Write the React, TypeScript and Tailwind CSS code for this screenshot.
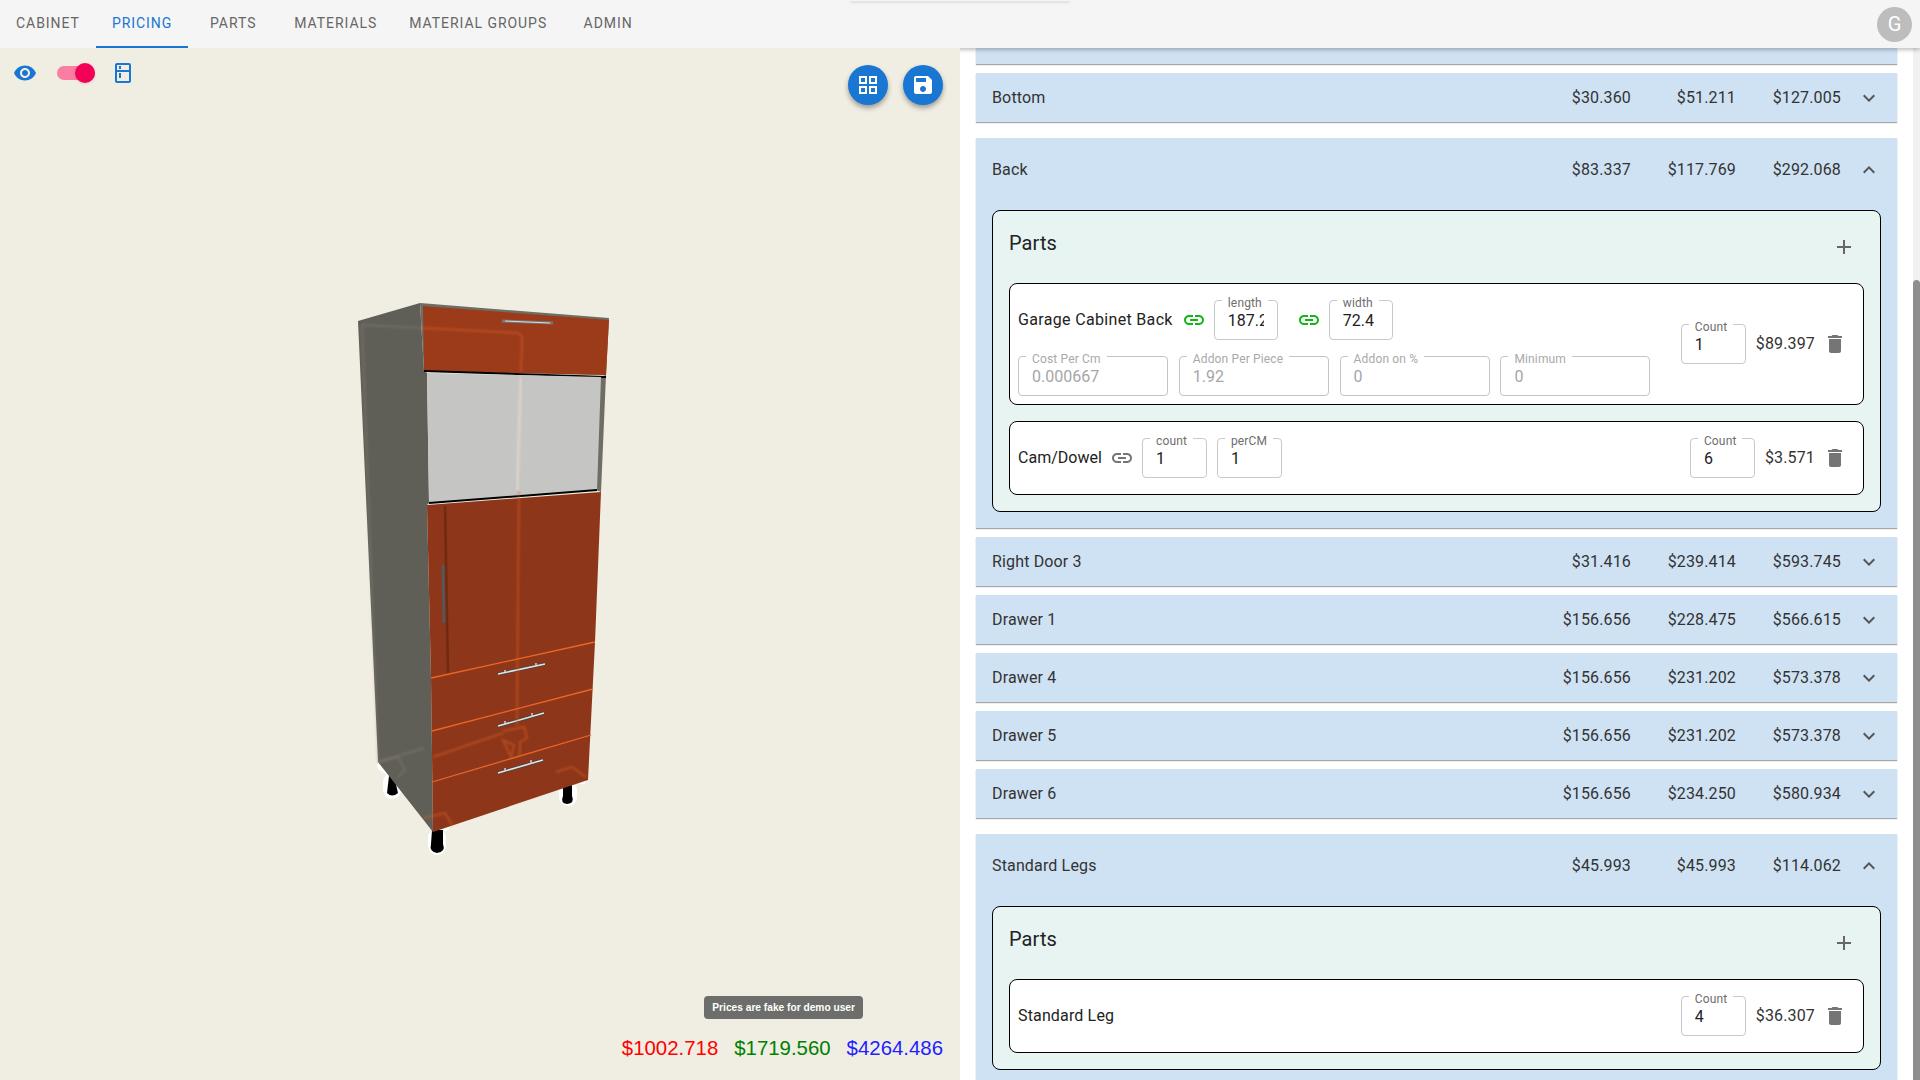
import type { ReactNode } from "react";

const icons = {
  eye: "M12 4.5C7 4.5 2.73 7.61 1 12c1.73 4.39 6 7.5 11 7.5s9.27-3.11 11-7.5c-1.73-4.39-6-7.5-11-7.5zM12 17c-2.76 0-5-2.24-5-5s2.24-5 5-5 5 2.24 5 5-2.24 5-5 5zm0-8c-1.66 0-3 1.34-3 3s1.34 3 3 3 3-1.34 3-3-1.34-3-3-3z",
  kitchen: "M18 2.01 6 2c-1.1 0-2 .89-2 2v16c0 1.1.9 2 2 2h12c1.1 0 2-.9 2-2V4c0-1.11-.9-1.99-2-1.99zM18 20H6v-9.02h12V20zm0-11H6V4h12v5zM8 5h2v3H8zm0 7h2v5H8z",
  grid: "M3 3v8h8V3H3zm6 6H5V5h4v4zm-6 4v8h8v-8H3zm6 6H5v-4h4v4zm4-16v8h8V3h-8zm6 6h-4V5h4v4zm-6 4v8h8v-8h-8zm6 6h-4v-4h4v4z",
  save: "M17 3H5c-1.11 0-2 .9-2 2v14c0 1.1.89 2 2 2h14c1.1 0 2-.9 2-2V7l-4-4zm-5 16c-1.66 0-3-1.34-3-3s1.34-3 3-3 3 1.34 3 3-1.34 3-3 3zm3-10H5V5h10v4z",
  link: "M3.9 12c0-1.71 1.39-3.1 3.1-3.1h4V7H7c-2.76 0-5 2.24-5 5s2.24 5 5 5h4v-1.9H7c-1.71 0-3.1-1.39-3.1-3.1zM8 13h8v-2H8v2zm9-6h-4v1.9h4c1.71 0 3.1 1.39 3.1 3.1s-1.39 3.1-3.1 3.1h-4V17h4c2.76 0 5-2.24 5-5s-2.24-5-5-5z",
  trash: "M6 19c0 1.1.9 2 2 2h8c1.1 0 2-.9 2-2V7H6v12zM19 4h-3.5l-1-1h-5l-1 1H5v2h14V4z",
  add: "M19 13h-6v6h-2v-6H5v-2h6V5h2v6h6v2z",
  more: "M16.59 8.59 12 13.17 7.41 8.59 6 10l6 6 6-6z",
  less: "M12 8l-6 6 1.41 1.41L12 10.83l4.59 4.58L18 14z",
};

const Icon = ({ d, className }: { d: string; className?: string }) => (
  <svg viewBox="0 0 24 24" fill="currentColor" className={`w-6 h-6 shrink-0 ${className ?? ""}`}>
    <path d={d} />
  </svg>
);

const tabs = ["CABINET", "PRICING", "PARTS", "MATERIALS", "MATERIAL GROUPS", "ADMIN"];

const Field = ({
  label,
  value,
  width = "w-[65px]",
  disabled,
}: {
  label: string;
  value: string;
  width?: string;
  disabled?: boolean;
}) => (
  <div
    className={`relative h-10 shrink-0 rounded border pl-[13px] pr-[13px] pt-[8px] ${width} ${
      disabled ? "border-[#c4c4c4] text-[#a6a6a6]" : "border-[#c9c9c9] text-[#222]"
    }`}
  >
    <span
      className={`absolute left-[7px] top-[-5px] bg-white px-[6px] text-[12px] leading-[15px] tracking-[0.15px] ${
        disabled ? "text-[#a9a9a9]" : "text-[#6e6e6e]"
      }`}
    >
      {label}
    </span>
    <div className="overflow-hidden whitespace-nowrap text-base leading-[23px]">{value}</div>
  </div>
);

const Price = ({ children }: { children: ReactNode }) => (
  <span className="w-[105px] text-right text-base tracking-[0.15px] text-[#333]">{children}</span>
);

const Row = ({
  name,
  prices,
  open,
  className,
  children,
}: {
  name: string;
  prices: string[];
  open?: boolean;
  className?: string;
  children?: ReactNode;
}) => (
  <div className={`shrink-0 bg-[#cfe2f3] shadow-[0_1px_1px_rgba(0,0,0,0.35)] ${className ?? ""}`}>
    <div className={`flex items-center pl-4 pr-4 ${open ? "h-[64px]" : "h-[49px]"}`}>
      <span className="flex-1 text-base tracking-[0.15px] text-[#333]">{name}</span>
      {prices.map((p, i) => (
        <Price key={i}>{p}</Price>
      ))}
      <Icon d={open ? icons.less : icons.more} className="ml-4 text-[#555]" />
    </div>
    {children && <div className="px-4 pb-4 pt-2">{children}</div>}
  </div>
);

const Parts = ({ children }: { children: ReactNode }) => (
  <div className="rounded-lg border border-black bg-[#e8f4f1] px-4 pb-4">
    <div className="flex h-[72px] items-center justify-between pb-[9px]">
      <span className="text-xl tracking-[0.1px] text-[#222]">Parts</span>
      <Icon d={icons.add} className="mr-2 mt-[8px] text-[#666]" />
    </div>
    <div className="flex flex-col gap-4">{children}</div>
  </div>
);

const PartName = ({ children, className }: { children: ReactNode; className?: string }) => (
  <span className={`whitespace-nowrap text-base text-[#222] ${className ?? "tracking-[0.15px]"}`}>{children}</span>
);

const PartEnd = ({ count, price, className }: { count: string; price: string; className?: string }) => (
  <div className={`flex items-center ${className ?? ""}`}>
    <Field label="Count" value={count} />
    <span className="ml-[10px] text-base tracking-[0.15px] text-[#333]">{price}</span>
    <Icon d={icons.trash} className="ml-2 text-[#757575]" />
  </div>
);

const CabinetDrawing = () => (
  <svg viewBox="0 48 960 1032" className="absolute inset-0 h-full w-full">
    <defs>
      <filter id="soft" x="-10%" y="-10%" width="120%" height="120%">
        <feGaussianBlur stdDeviation="0.9" />
      </filter>
    </defs>

    {/* feet halo */}
    <g stroke="#ffffff" strokeWidth="18" strokeLinecap="round" fill="none">
      <path d="M392 782 L392 790" />
      <path d="M437 838 L437 846" />
      <path d="M568 790 L568 797" />
      <path d="M382 766 L392 772" strokeWidth="10" />
      <path d="M428 818 L445 826" strokeWidth="10" />
      <path d="M560 775 L582 780" strokeWidth="8" />
    </g>
    <path d="M389 776 L394 776 L398 793 Q392 798 387 793Z" fill="#000" />
    <path d="M432 830 L443 830 L443 844 Q446 852 437 853 Q429 852 431 844Z" fill="#000" />
    <path d="M563 786 L572 785 L572 796 Q575 803 567 804 Q560 803 563 796Z" fill="#000" />

    {/* side and top */}
    <path d="M358 321 L420 303 L424 371 L427 373 L429 503 L427 505 L431 678 L433 832 L378 762 Z" fill="#5f5f58" />
    <path d="M420 303 L609 318 L606 375 L424 371 Z" fill="#6e6e66" />
    <path d="M606 375 L600 377 L596 490 L601 492 Z" fill="#6e6e66" />

    {/* top drawer */}
    <path d="M423 306 L609 320 L606 375 L424 371 Z" fill="#9c3b1a" />
    <path d="M424 371 L606 377" stroke="#000" strokeWidth="2" />
    <path d="M502 321 L553 323" stroke="#777" strokeWidth="3" />
    <path d="M505 321 L550 323" stroke="#d8d8d8" strokeWidth="1" />

    {/* glass */}
    <path d="M427 373 L601 377 L597 490 L429 503 Z" fill="#c5c5c3" />
    <path d="M429 503 L597 490" stroke="#000" strokeWidth="2" />

    {/* door and drawers */}
    <path d="M427 505 L601 492 L595 642 L588 780 L433 832 L431 678 Z" fill="#8e3619" />
    <path d="M445 506 L448 673" stroke="#6f2a12" strokeWidth="2.5" />
    <path d="M443 565 L444 623" stroke="#55555a" strokeWidth="3" />
    <path d="M431 678 L595 642" stroke="#e8672a" strokeWidth="1.3" />
    <path d="M432 731 L593 689" stroke="#e8672a" strokeWidth="1.3" />
    <path d="M432 782 L591 735" stroke="#e8672a" strokeWidth="1.3" />
    {[
      { d: "M498 674 L545 664", a: "M505 672 L505 670", b: "M536 666 L536 663" },
      { d: "M498 726 L544 713", a: "M505 724 L505 721", b: "M532 717 L532 713" },
      { d: "M498 773 L543 760", a: "M505 771 L505 768", b: "M531 764 L531 760" },
    ].map(({ d, a, b }) => (
      <g key={d}>
        <path d={d} stroke="#444" strokeWidth="3" />
        <path d={d} stroke="#e6e6e6" strokeWidth="1.5" />
        <path d={a} stroke="#d0d0d0" strokeWidth="1.5" />
        <path d={b} stroke="#d0d0d0" strokeWidth="1.5" />
      </g>
    ))}

    {/* see through frame lines */}
    <g fill="none" stroke="#d8602a" strokeOpacity="0.5" strokeWidth="2" filter="url(#soft)">
      <path d="M423 328 L518 333 Q522 334 522 340 L521 372" />
      <path d="M519 492 L518 590 L517 725" />
      <path d="M433 757 L503 733" />
      <path d="M503 731 L524 727 L527 738 L520 742 L520 750 L519 757 M511 757 L514 745 L503 740 Z" />
      <path d="M556 772 L572 767 L586 777" />
      <path d="M424 818 L445 813 L452 825" />
    </g>
    <g fill="none" stroke="#a08a7c" strokeOpacity="0.3" strokeWidth="2" filter="url(#soft)">
      <path d="M362 325 L423 328" />
      <path d="M362 325 L378 762 L424 748" />
      <path d="M378 762 L398 757 L405 770 L398 777" />
    </g>
    <path d="M521 377 L517 490" stroke="#e6d8cc" strokeWidth="3" strokeOpacity="0.7" filter="url(#soft)" />
  </svg>
);

export default function App() {
  return (
    <div className="flex h-[1080px] w-[1920px] flex-col overflow-hidden bg-white font-['Roboto',sans-serif]">
      <header className="relative z-10 flex h-12 shrink-0 items-center justify-between bg-[#f5f5f5] shadow-[0_2px_4px_rgba(0,0,0,0.25)]">
        <nav className="flex h-full">
          {tabs.map((t) => (
            <div
              key={t}
              className={`flex min-w-[90px] items-center justify-center border-b-2 px-4 text-sm tracking-[0.95px] ${
                t === "PRICING" ? "border-[#1976d2] text-[#1976d2]" : "border-transparent text-[#666]"
              }`}
            >
              {t}
            </div>
          ))}
        </nav>
        {/* edge of a hidden snackbar peeking in from the top */}
        <div className="absolute left-[850px] top-0 h-px w-[220px] rounded-b bg-[#f5f5f5] shadow-[0_1px_3px_rgba(0,0,0,0.25)]" />
        <div className="mr-[8px] flex h-[35px] w-[35px] items-center justify-center rounded-full bg-[#bdbdbd] text-xl text-white">
          G
        </div>
      </header>

      <div className="flex min-h-0 flex-1">
        <main className="relative z-20 flex w-[960px] shrink-0 flex-col justify-between bg-[#f0eee2]">
          <CabinetDrawing />
          <div className="relative flex items-start justify-between pl-[13px] pr-[17px] pt-[13px]">
            <div className="flex items-center">
              <Icon d={icons.eye} className="text-[#1976d2]" />
              <div className="relative ml-[20px] h-[14px] w-[38px] rounded-full bg-[#f97ea1]">
                <span className="absolute right-0 top-[-3px] h-5 w-5 rounded-full bg-[#f50057] shadow" />
              </div>
              <Icon d={icons.kitchen} className="ml-4 text-[#1976d2]" />
            </div>
            <div className="mt-1 flex gap-[15px]">
              <div className="flex h-10 w-10 items-center justify-center rounded-full bg-[#1976d2] text-white shadow-[0_3px_5px_rgba(0,0,0,0.35)]">
                <Icon d={icons.grid} />
              </div>
              <div className="flex h-10 w-10 items-center justify-center rounded-full bg-[#1976d2] text-white shadow-[0_3px_5px_rgba(0,0,0,0.35)]">
                <Icon d={icons.save} />
              </div>
            </div>
          </div>
          <div className="relative flex flex-col items-end pb-[20px] pr-[17px]">
            <div className="mb-[18px] mr-[80px] rounded bg-[#6d6d6b] px-2 py-[4px] font-['Liberation_Sans',sans-serif] text-[10.2px] font-bold leading-[15px] text-white">
              Prices are fake for demo user
            </div>
            <div className="flex gap-[16px] font-['Liberation_Sans',sans-serif] text-[20.4px] leading-[23px]">
              <span className="text-[#ff0000]">$1002.718</span>
              <span className="text-[#008000]">$1719.560</span>
              <span className="text-[#1f1fff]">$4264.486</span>
            </div>
          </div>
        </main>

        <section className="flex min-w-0 flex-1 flex-col gap-0 overflow-hidden px-4">
          <div className="h-4 shrink-0 bg-[#cfe2f3] shadow-[0_1px_1px_rgba(0,0,0,0.35)]" />
          <Row className="mt-[9px]" name="Bottom" prices={["$30.360", "$51.211", "$127.005"]} />
          <Row className="mt-4" name="Back" prices={["$83.337", "$117.769", "$292.068"]} open>
            <Parts>
              <div className="flex items-center justify-between rounded-lg border border-black bg-white pb-2 pl-2 pr-4 pt-4">
                <div className="flex flex-col gap-4">
                  <div className="flex items-center">
                    <PartName className="tracking-[0.33px]">Garage Cabinet Back</PartName>
                    <Icon d={icons.link} className="ml-[9px] text-[#12b812]" />
                    <Field label="length" value="187.2" width="ml-2 w-[64px]" />
                    <Icon d={icons.link} className="ml-[19px] text-[#12b812]" />
                    <Field label="width" value="72.4" width="ml-2 w-[64px]" />
                  </div>
                  <div className="flex gap-[10.8px]">
                    <Field disabled label="Cost Per Cm" value="0.000667" width="w-[150px]" />
                    <Field disabled label="Addon Per Piece" value="1.92" width="w-[150px]" />
                    <Field disabled label="Addon on %" value="0" width="w-[150px]" />
                    <Field disabled label="Minimum" value="0" width="w-[150px]" />
                  </div>
                </div>
                <PartEnd className="mb-2" count="1" price="$89.397" />
              </div>
              <div className="flex h-[74px] items-center justify-between rounded-lg border border-black bg-white pl-2 pr-4">
                <div className="flex items-center">
                  <PartName className="tracking-[0.02px]">Cam/Dowel</PartName>
                  <Icon d={icons.link} className="ml-2 text-[#757575]" />
                  <Field label="count" value="1" width="ml-2 w-[65px]" />
                  <Field label="perCM" value="1" width="ml-[10px] w-[65px]" />
                </div>
                <PartEnd count="6" price="$3.571" />
              </div>
            </Parts>
          </Row>
          <Row className="mt-[9px]" name="Right Door 3" prices={["$31.416", "$239.414", "$593.745"]} />
          <Row className="mt-[9px]" name="Drawer 1" prices={["$156.656", "$228.475", "$566.615"]} />
          <Row className="mt-[9px]" name="Drawer 4" prices={["$156.656", "$231.202", "$573.378"]} />
          <Row className="mt-[9px]" name="Drawer 5" prices={["$156.656", "$231.202", "$573.378"]} />
          <Row className="mt-[9px]" name="Drawer 6" prices={["$156.656", "$234.250", "$580.934"]} />
          <Row className="mt-4" name="Standard Legs" prices={["$45.993", "$45.993", "$114.062"]} open>
            <Parts>
              <div className="flex h-[74px] items-center justify-between rounded-lg border border-black bg-white pl-2 pr-4">
                <PartName>Standard Leg</PartName>
                <PartEnd count="4" price="$36.307" />
              </div>
            </Parts>
          </Row>
        </section>

        <aside className="flex w-[7px] shrink-0 flex-col bg-[#f1f1f1] pt-[232px]">
          <div className="flex-1 rounded-t bg-[#8e8e8e]" />
        </aside>
      </div>
    </div>
  );
}
